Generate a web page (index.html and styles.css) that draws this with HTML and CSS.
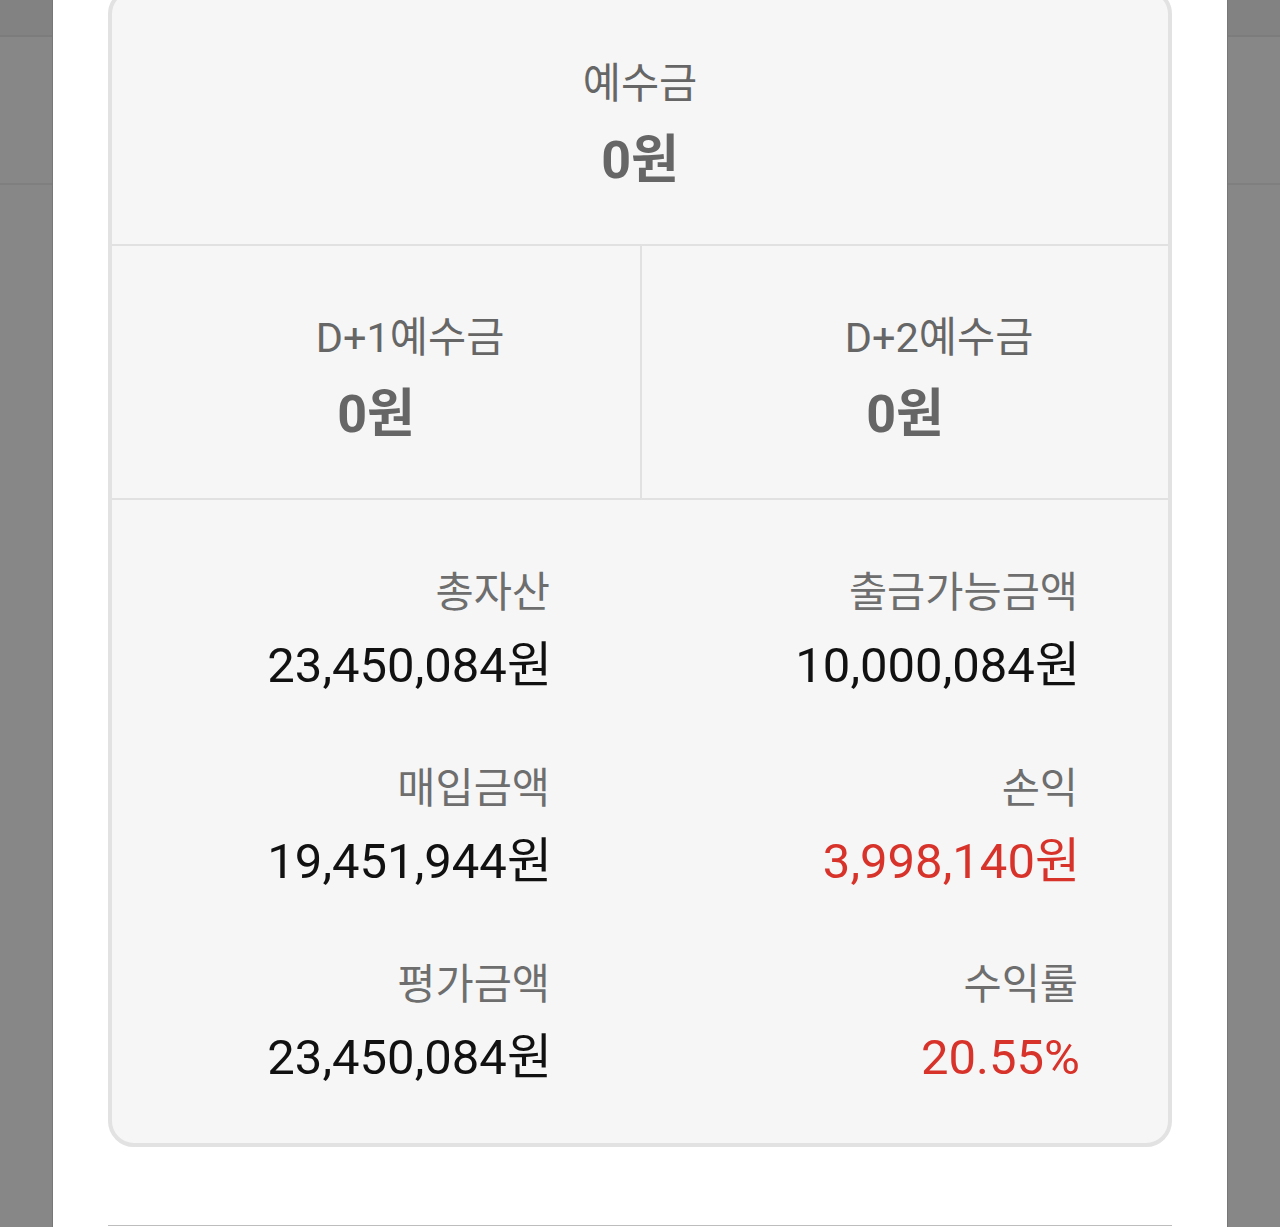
FILE: index.html
```html
<!DOCTYPE html>
<html lang="ko">
  <head>
    <meta charset="UTF-8">
    <meta name="viewport" content="width=device-width, initial-scale=1.0">
    <title>계좌 잔고</title>
    <link rel="stylesheet" href="styles.css">
  </head>
  <body>
    <div class="screen">
      <div class="card">
        <div class="deposit">
          <p class="label">예수금</p>
          <p class="amount">0원</p>
        </div>

        <div class="settle">
          <div class="settle-cell">
            <p class="label">D+1예수금</p>
            <p class="amount">0원</p>
          </div>
          <div class="settle-cell">
            <p class="label">D+2예수금</p>
            <p class="amount">0원</p>
          </div>
        </div>

        <div class="summary">
          <div class="item">
            <p class="item-label">총자산</p>
            <p class="item-value">23,450,084원</p>
          </div>
          <div class="item">
            <p class="item-label">출금가능금액</p>
            <p class="item-value">10,000,084원</p>
          </div>
          <div class="item">
            <p class="item-label">매입금액</p>
            <p class="item-value">19,451,944원</p>
          </div>
          <div class="item">
            <p class="item-label">손익</p>
            <p class="item-value up">3,998,140원</p>
          </div>
          <div class="item">
            <p class="item-label">평가금액</p>
            <p class="item-value">23,450,084원</p>
          </div>
          <div class="item">
            <p class="item-label">수익률</p>
            <p class="item-value up">20.55%</p>
          </div>
        </div>
      </div>

      <div class="next-section"></div>
    </div>
  </body>
</html>
```

FILE: styles.css
```css
html {
  background: linear-gradient(to bottom,
    #828282 0, #828282 35px,
    #7c7c7c 35px, #7c7c7c 37px,
    #878787 37px, #878787 183px,
    #7f7f7f 183px, #7f7f7f 185px,
    #878787 185px);
  background-color: #878787;
}

body {
  margin: 0;
  font-family: "Roboto", "Noto Sans CJK KR", sans-serif;
  color: #333;
}

p {
  margin: 0;
}

.screen {
  width: 1174px;
  height: 1227px;
  margin: 0 auto;
  background-color: #fff;
  box-shadow: -1px 0 0 #777, 1px 0 0 #777;
  overflow: hidden;
}

.card {
  margin: -12px 55px 0;
  border: 4px solid #e2e2e2;
  border-radius: 26px;
  background-color: #f6f6f6;
}

/* deposit blocks */
.label {
  font-size: 41.5px;
  line-height: 50px;
  color: #666;
}

.amount {
  margin-top: 22px;
  font-size: 52px;
  line-height: 60px;
  font-weight: 700;
  color: #666;
}

.deposit {
  padding: 67px 0 53px;
  text-align: center;
  border-bottom: 2px solid #e1e1e1;
}

.settle {
  display: grid;
  grid-template-columns: 1fr 1fr;
  border-bottom: 2px solid #e1e1e1;
}

.settle-cell {
  padding: 67px 0 53px;
  text-align: center;
}

.settle-cell + .settle-cell {
  border-left: 2px solid #e1e1e1;
}

.settle-cell .label {
  padding-left: 68px;
}

/* totals */
.summary {
  display: grid;
  grid-template-columns: 1fr 1fr;
  row-gap: 70px;
  padding: 68px 0 57px;
}

.item {
  padding-right: 90px;
  text-align: right;
}

.item-label {
  font-size: 41.5px;
  line-height: 50px;
  color: #6e6e6e;
}

.item-value {
  margin-top: 20px;
  margin-right: -2px;
  font-size: 49px;
  line-height: 56px;
  color: #111;
}

.item-value.up {
  color: #d8332b;
}

.next-section {
  margin: 78px 55px 0 55px;
  border-top: 1px solid #bdbdbd;
}
```
